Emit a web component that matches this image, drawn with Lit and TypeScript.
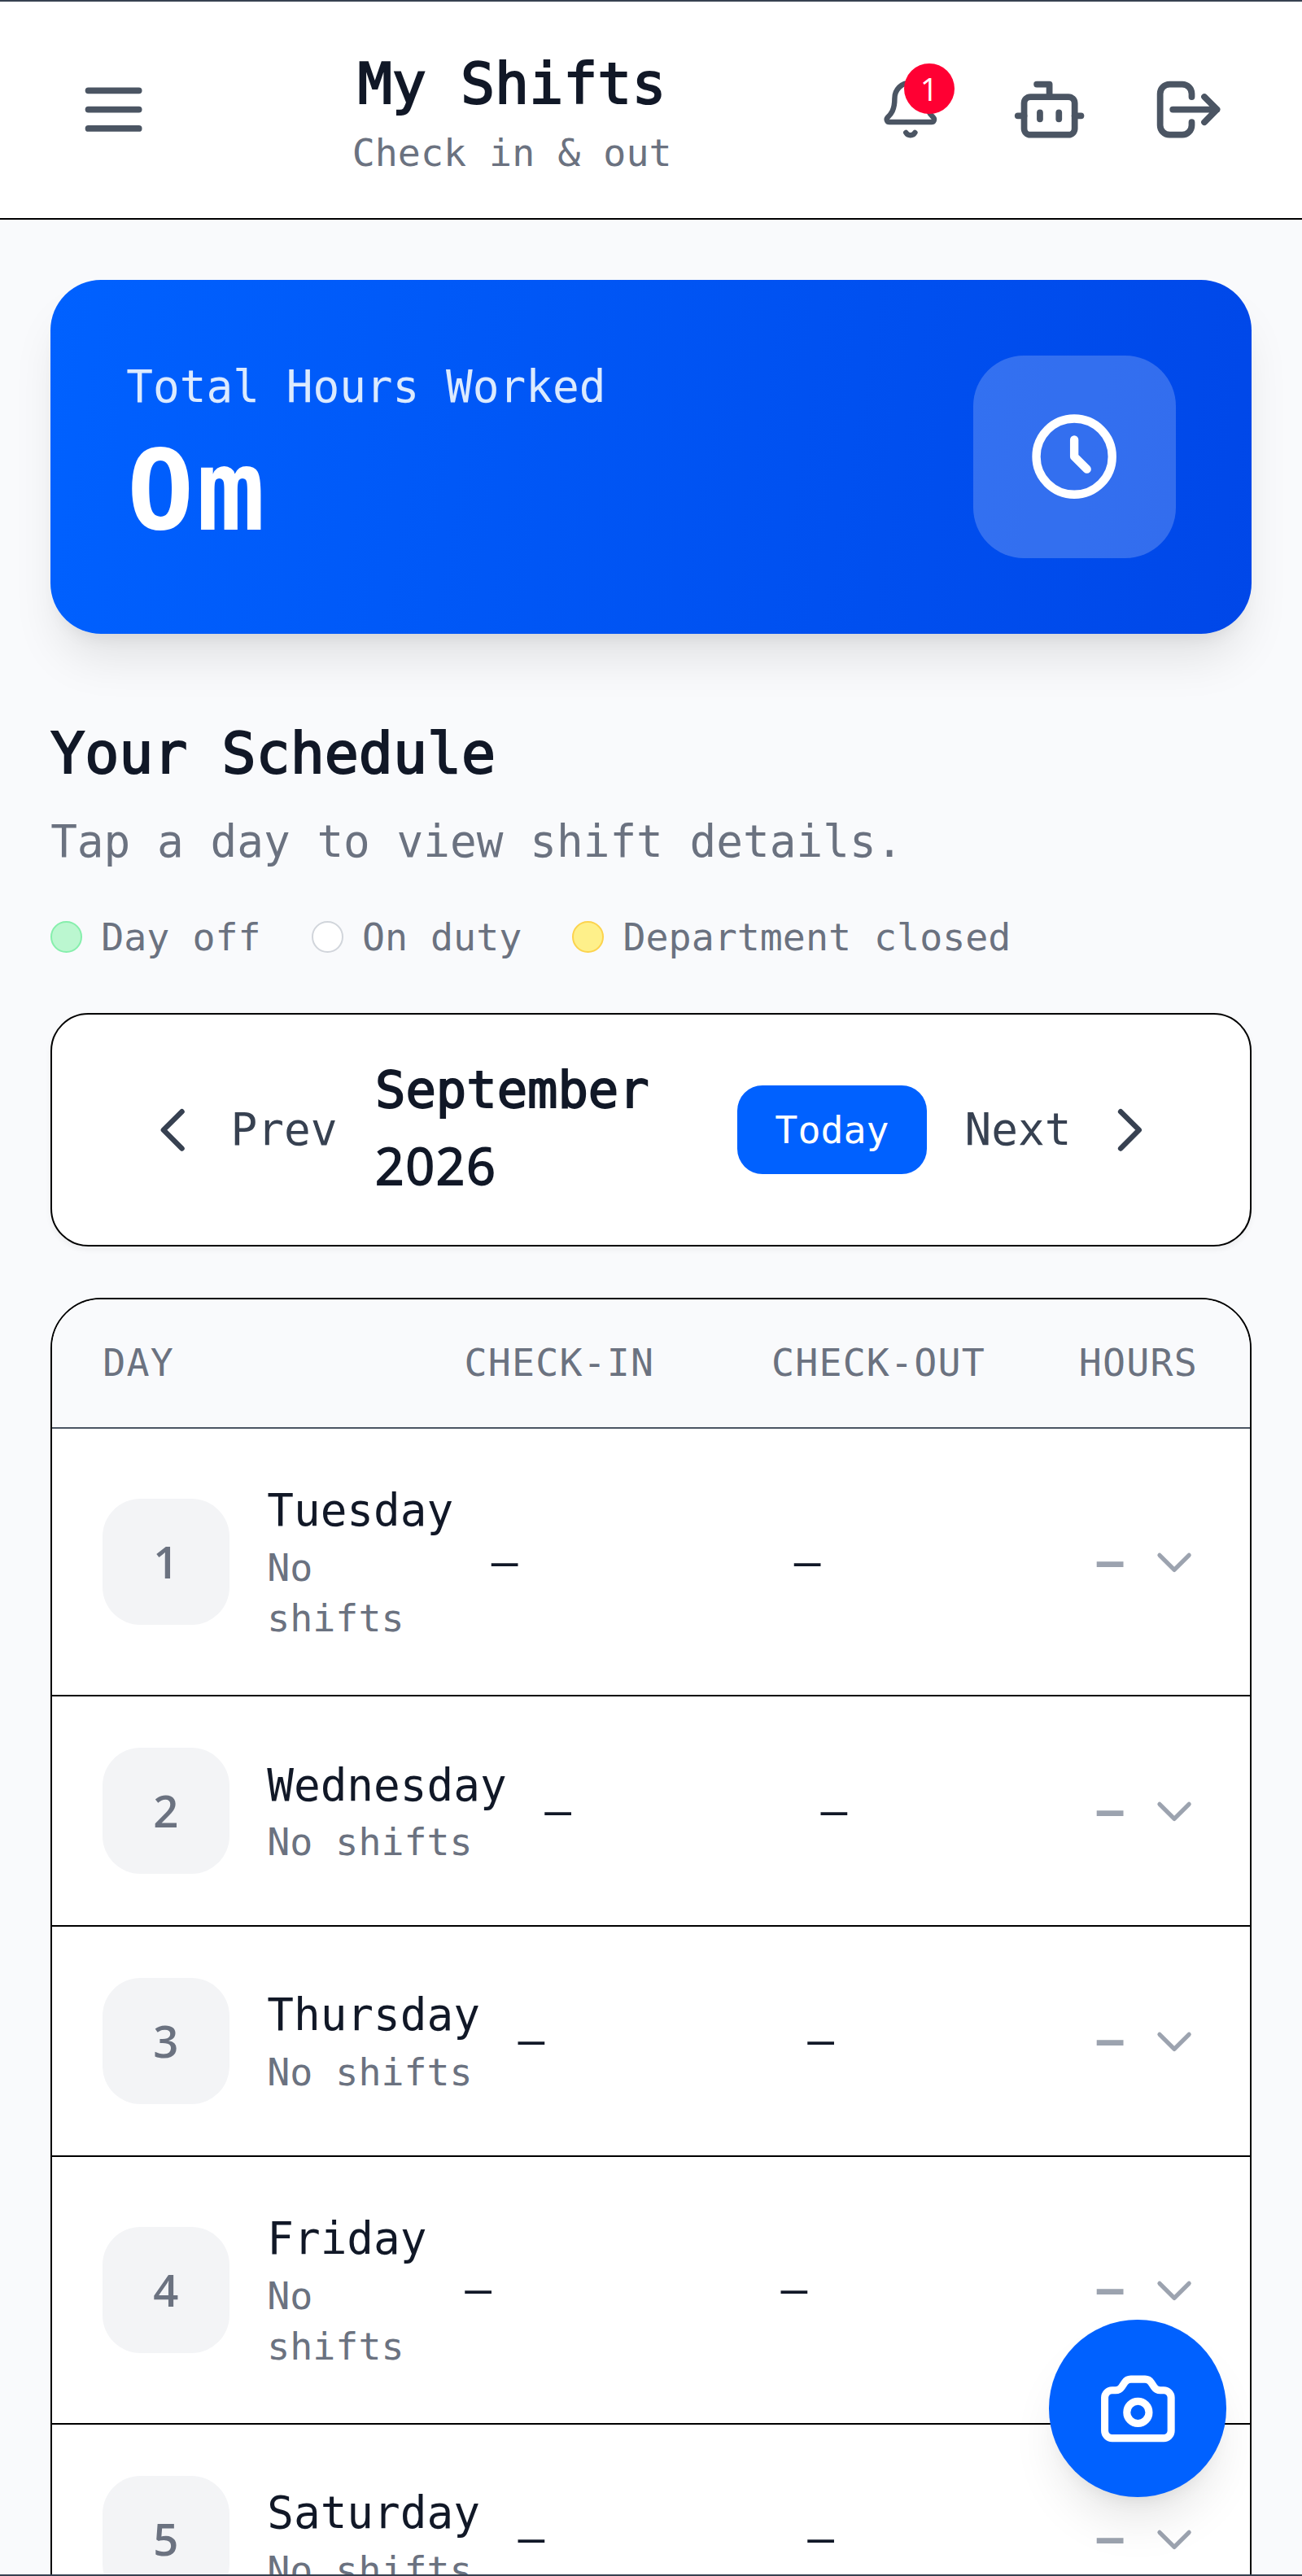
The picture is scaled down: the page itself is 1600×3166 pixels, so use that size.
import { LitElement, html, css } from "lit";
import { customElement } from "lit/decorators.js";

const rows = [
  { n: "1", day: "Tuesday" },
  { n: "2", day: "Wednesday" },
  { n: "3", day: "Thursday" },
  { n: "4", day: "Friday" },
  { n: "5", day: "Saturday" },
];

const chevDown = html`<svg class="chev" viewBox="0 0 24 24" fill="none" stroke="currentColor" stroke-width="2" stroke-linecap="round" stroke-linejoin="round"><path d="M19 9l-7 7-7-7" /></svg>`;

@customElement("app-root")
export class AppRoot extends LitElement {
  static styles = css`
    :host {
      display: block;
      zoom: 3.8835;
      height: 815.25px;
      overflow: hidden;
      position: relative;
      background: #f9fafc;
      font-family: "DejaVu Sans Mono", monospace;
      color: #111827;
    }
    * { box-sizing: border-box; }
    .frame { position: absolute; left: 0; right: 0; height: 0.5px; background: #374151; z-index: 5; }
    .frame.top { top: 0; }
    .frame.bottom { bottom: 0; }
    .dg { font-family: "Open Sans", sans-serif; letter-spacing: 0.03em; }
    .strong { font-weight: 400; -webkit-text-stroke: 0.03em currentColor; }

    header {
      height: 69.6px;
      display: flex;
      align-items: center;
      justify-content: space-between;
      padding: 0 16px;
      background: #fff;
      border-bottom: 0.55px solid #000;
    }
    .ibtn {
      width: 40px;
      height: 40px;
      display: flex;
      align-items: center;
      justify-content: center;
      position: relative;
      color: #4b5563;
    }
    .ibtn svg { width: 24px; height: 24px; }
    .ibtn svg.bell { width: 20px; height: 20px; }
    .titles { text-align: center; }
    .titles h1 { margin: 0; font-size: 18px; line-height: 28px; }
    .titles p { margin: 0; font-size: 12px; line-height: 16px; color: #6b7280; }
    .actions { display: flex; gap: 4px; }
    .badge {
      position: absolute;
      top: 5.5px;
      right: 6px;
      width: 16px;
      height: 16px;
      border-radius: 50%;
      background: #ff0033;
      color: #fff;
      font-family: "Open Sans", sans-serif;
      font-size: 10px;
      display: flex;
      align-items: center;
      justify-content: center;
    }

    main { padding: 19px 16px 0; }
    .hero {
      height: 112px;
      padding: 24px;
      border-radius: 16px;
      background: linear-gradient(100deg, #0061ff, #0047e8);
      box-shadow: 0 10px 15px -3px rgba(0,0,0,.1), 0 4px 6px -4px rgba(0,0,0,.1);
      display: flex;
      align-items: center;
      justify-content: space-between;
      color: #fff;
    }
    .hero .lbl { font-size: 14px; line-height: 20px; color: #dbeafe; }
    .hero .val { font-size: 36px; line-height: 40px; font-weight: 700; margin-top: 1.5px; padding: 0 0 1.5px 0.5px; }
    .hero .box {
      width: 64px;
      height: 64px;
      border-radius: 16px;
      background: rgba(255,255,255,.2);
      display: flex;
      align-items: center;
      justify-content: center;
    }
    .hero .box svg { width: 32px; height: 32px; }

    h2 { margin: 24px 0 0; font-size: 18px; line-height: 28px; }
    .sub { margin: 4px 0 0; font-size: 14px; line-height: 20px; color: #6b7280; }
    .legend { display: flex; gap: 16px; margin-top: 12px; font-size: 12px; line-height: 16px; color: #6b7280; }
    .legend span.it { display: flex; align-items: center; gap: 6px; }
    .dot { width: 10px; height: 10px; border-radius: 50%; border: 0.55px solid; }
    .dot.g { background: #bbf7d0; border-color: #86efac; }
    .dot.w { background: #fff; border-color: #d1d5db; }
    .dot.y { background: #fef08a; border-color: #fcd34d; }

    .nav {
      margin-top: 16px;
      height: 74px;
      padding: 0 28.5px;
      background: #fff;
      border: 0.55px solid #000;
      border-radius: 12px;
      box-shadow: 0 1px 2px rgba(0,0,0,.05);
      display: flex;
      align-items: center;
      gap: 12px;
    }
    .nb { display: flex; align-items: center; gap: 8px; font-size: 14px; color: #374151; }
    .nb svg { width: 20px; height: 20px; }
    .month { flex: 1; min-width: 0; font-size: 16px; line-height: 24px; margin-top: -1px; }
    .today {
      width: 60px;
      height: 28px;
      border-radius: 8px;
      background: #0061ff;
      color: #fff;
      font-size: 12px;
      display: flex;
      align-items: center;
      justify-content: center;
    }

    .table {
      margin-top: 16px;
      border: 0.55px solid #000;
      border-radius: 16px;
      overflow: hidden;
      background: #fff;
    }
    .thead {
      height: 41px;
      padding: 0 16px;
      display: grid;
      grid-template-columns: 114.4px 97.2px 97.3px auto;
      align-items: center;
      background: #f9fafc;
      border-bottom: 0.55px solid #4b5563;
      font-size: 12px;
      letter-spacing: 0.3px;
      color: #6b7280;
    }
    .row {
      padding: 16.15px 16px;
      display: grid;
      grid-template-columns: min-content 1fr 1fr auto;
      column-gap: 12px;
      align-items: center;
      border-bottom: 0.55px solid #000;
    }
    .daycell { display: flex; align-items: center; gap: 12px; }
    .num {
      flex: none;
      width: 40px;
      height: 40px;
      border-radius: 12px;
      background: #f3f4f6;
      color: #6b7280;
      font-family: "Open Sans", sans-serif;
      font-size: 14px;
      font-weight: 600;
      display: flex;
      align-items: center;
      justify-content: center;
    }
    .name { font-size: 14px; line-height: 20px; }
    .sh { font-size: 12px; line-height: 16px; color: #6b7280; }
    .dash { font-size: 14px; line-height: 20px; }
    .hours { display: flex; align-items: center; gap: 8px; color: #9ca3af; }
    .hours .dash { font-weight: 700; }
    .chev { width: 16px; height: 16px; }

    .fab {
      position: absolute;
      right: 24px;
      bottom: 25px;
      width: 56px;
      height: 56px;
      border-radius: 50%;
      background: #0061ff;
      color: #fff;
      display: flex;
      align-items: center;
      justify-content: center;
      box-shadow: 0 10px 15px -3px rgba(0,0,0,.1), 0 4px 6px -4px rgba(0,0,0,.1);
    }
    .fab svg { width: 28px; height: 28px; }
  `;

  render() {
    return html`
      <div class="frame top"></div>
      <header>
        <div class="ibtn">
          <svg viewBox="0 0 24 24" fill="none" stroke="currentColor" stroke-width="2" stroke-linecap="round" stroke-linejoin="round"><path d="M4 6h16M4 12h16M4 18h16" /></svg>
        </div>
        <div class="titles">
          <h1 class="strong">My Shifts</h1>
          <p>Check in &amp; out</p>
        </div>
        <div class="actions">
          <div class="ibtn">
            <svg class="bell" viewBox="0 0 24 24" fill="none" stroke="currentColor" stroke-width="2" stroke-linecap="round" stroke-linejoin="round"><path d="M10.268 21a2 2 0 0 0 3.464 0" /><path d="M3.262 15.326A1 1 0 0 0 4 17h16a1 1 0 0 0 .74-1.673C19.41 13.956 18 12.499 18 8A6 6 0 0 0 6 8c0 4.499-1.411 5.956-2.738 7.326" /></svg>
            <span class="badge">1</span>
          </div>
          <div class="ibtn">
            <svg viewBox="0 0 24 24" fill="none" stroke="currentColor" stroke-width="2" stroke-linecap="round" stroke-linejoin="round"><path d="M12 8V4H8" /><rect x="4" y="8" width="16" height="12" rx="2" /><path d="M2 14h2" /><path d="M20 14h2" /><path d="M15 13v2" /><path d="M9 13v2" /></svg>
          </div>
          <div class="ibtn">
            <svg viewBox="0 0 24 24" fill="none" stroke="currentColor" stroke-width="2" stroke-linecap="round" stroke-linejoin="round"><path d="M17 16l4-4m0 0l-4-4m4 4H7m6 4v1a3 3 0 01-3 3H6a3 3 0 01-3-3V7a3 3 0 013-3h4a3 3 0 013 3v1" /></svg>
          </div>
        </div>
      </header>
      <main>
        <section class="hero">
          <div>
            <div class="lbl">Total Hours Worked</div>
            <div class="val"><span class="dg">0</span>m</div>
          </div>
          <div class="box">
            <svg viewBox="0 0 24 24" fill="none" stroke="currentColor" stroke-width="2" stroke-linecap="round" stroke-linejoin="round"><circle cx="12" cy="12" r="9" /><path d="M12 8v4l3 3" /></svg>
          </div>
        </section>
        <h2 class="strong">Your Schedule</h2>
        <p class="sub">Tap a day to view shift details.</p>
        <div class="legend">
          <span class="it"><span class="dot g"></span>Day off</span>
          <span class="it"><span class="dot w"></span>On duty</span>
          <span class="it"><span class="dot y"></span>Department closed</span>
        </div>
        <div class="nav">
          <div class="nb">
            <svg viewBox="0 0 24 24" fill="none" stroke="currentColor" stroke-width="2" stroke-linecap="round" stroke-linejoin="round"><path d="M15 19l-7-7 7-7" /></svg>
            Prev
          </div>
          <div class="month strong">September <span class="dg">2026</span></div>
          <div class="today">Today</div>
          <div class="nb">
            Next
            <svg viewBox="0 0 24 24" fill="none" stroke="currentColor" stroke-width="2" stroke-linecap="round" stroke-linejoin="round"><path d="M9 5l7 7-7 7" /></svg>
          </div>
        </div>
        <div class="table">
          <div class="thead"><span>DAY</span><span>CHECK-IN</span><span>CHECK-OUT</span><span>HOURS</span></div>
          ${rows.map(
            (r) => html`
              <div class="row">
                <div class="daycell">
                  <div class="num">${r.n}</div>
                  <div>
                    <div class="name">${r.day}</div>
                    <div class="sh">No shifts</div>
                  </div>
                </div>
                <div class="dash">—</div>
                <div class="dash">—</div>
                <div class="hours"><span class="dash">—</span>${chevDown}</div>
              </div>
            `
          )}
        </div>
      </main>
      <div class="fab">
        <svg viewBox="0 0 24 24" fill="none" stroke="currentColor" stroke-width="2" stroke-linecap="round" stroke-linejoin="round"><path d="M3 9a2 2 0 012-2h.93a2 2 0 001.664-.89l.812-1.22A2 2 0 0110.07 4h3.86a2 2 0 011.664.89l.812 1.22A2 2 0 0018.07 7H19a2 2 0 012 2v9a2 2 0 01-2 2H5a2 2 0 01-2-2V9z" /><path d="M15 13a3 3 0 11-6 0 3 3 0 016 0z" /></svg>
      </div>
      <div class="frame bottom"></div>
    `;
  }
}
